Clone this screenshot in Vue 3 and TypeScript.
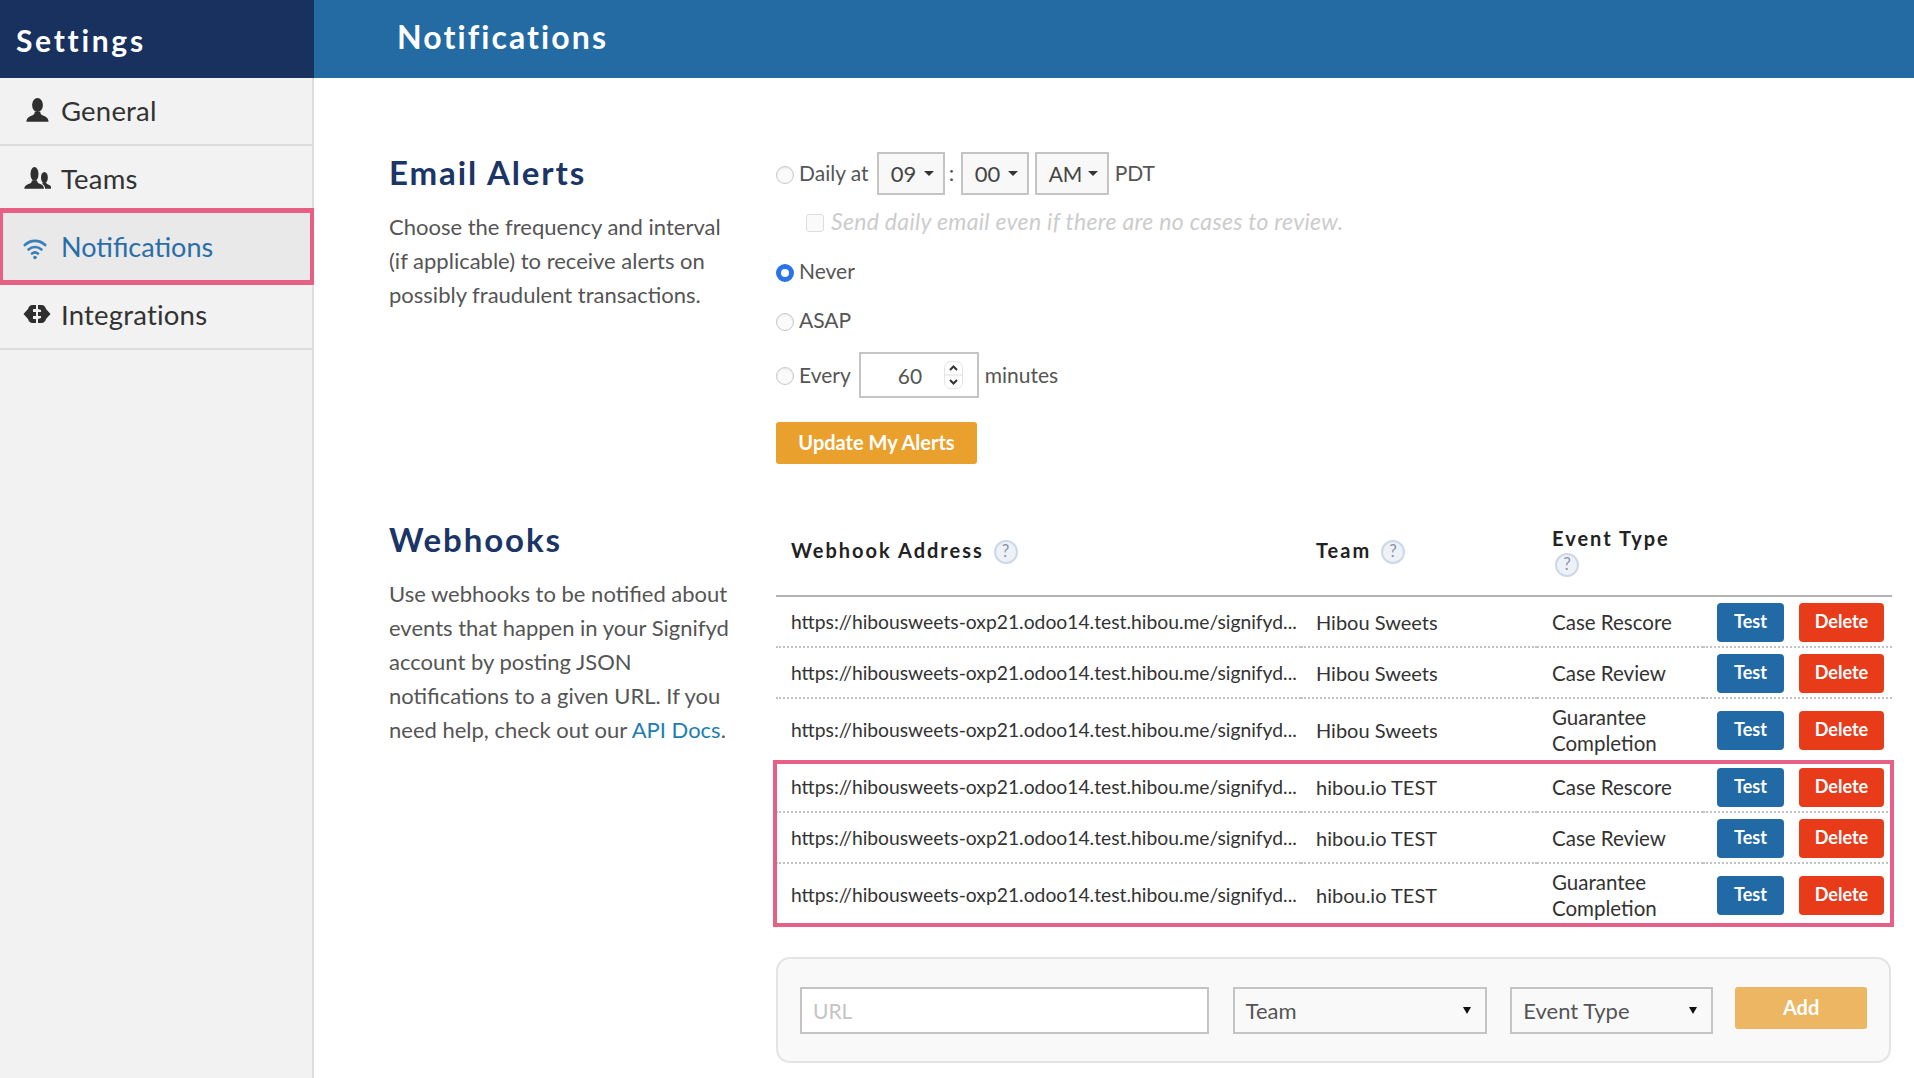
<template>
  <div class="page">
    <aside class="sidebar">
      <div class="side-title">Settings</div>
      <nav class="side-nav">
        <a class="side-item">
          <svg class="side-icon" viewBox="0 0 28 28" width="28" height="28" fill="#2f2f2f">
            <ellipse cx="14.500" cy="9" rx="5.400" ry="7" />
            <path d="M3.500 25.800c0-4 3-5.500 6-6.500 1.500-.5 2.200-1.500 2.200-3.500h5.600c0 2 .7 3 2.200 3.500 3 1 6 2.500 6 6.500z" />
          </svg>
          <span>General</span>
        </a>
        <a class="side-item">
          <svg class="side-icon" viewBox="0 0 28 28" width="28" height="28" fill="#2f2f2f">
            <ellipse cx="11.500" cy="10" rx="4" ry="7" />
            <ellipse cx="21.400" cy="13.500" rx="3.400" ry="5.500" />
            <path d="M1.300 24.800c0-3 2.500-4.300 5-5.100 1.800-.6 2.500-1.400 2.500-3.200h5.400c0 1.800.7 2.600 2.500 3.200 2.500.8 4.300 2.100 4.300 5.100z" />
            <path d="M19.500 18.500h3.800c0 1 .6 1.500 1.800 2 2 .7 3.600 1.800 3.600 4.300h-6.500c-.2-2.300-1-3.500-2.700-4.800z" />
          </svg>
          <span>Teams</span>
        </a>
        <a class="side-item active">
          <svg class="side-icon" viewBox="0 0 28 28" width="28" height="28" fill="none" stroke="#3a7fb8" stroke-width="2.600" stroke-linecap="round">
            <path d="M1.800 12c6-5.500 14.400-5.500 20.400 0" />
            <path d="M5.500 16.500c3.800-3.400 9.200-3.400 13 0" />
            <path d="M9 20.500c1.900-1.500 4.100-1.500 6 0" />
            <circle cx="12" cy="24.500" r="1.800" fill="#3a7fb8" stroke="none" />
          </svg>
          <span>Notifications</span>
        </a>
        <a class="side-item">
          <svg class="side-icon" viewBox="0 0 28 28" width="28" height="28" fill="#2f2f2f">
            <path d="M13 5H9.500C7 5 5.500 6.800 5 9L.5 14 5 19c.5 2.200 2 4 4.500 4H13v-4h-3v-3h3v-4h-3V9h3z" />
            <path d="M15 5h3.500c2.500 0 4 1.800 4.500 4l4.500 5-4.500 5c-.5 2.200-2 4-4.500 4H15v-4l3-1v-2h-3v-4h3v-2l-3-1z" />
          </svg>
          <span>Integrations</span>
        </a>
      </nav>
    </aside>

    <div class="main">
      <header class="topbar">Notifications</header>
      <div class="content">
        <section class="section email">
          <div class="intro">
            <h2>Email Alerts</h2>
            <p>Choose the frequency and interval (if applicable) to receive alerts on possibly fraudulent transactions.</p>
          </div>
          <div class="alerts">
            <div class="alert-row daily">
              <input class="radio" type="radio" name="freq" />
              <span>Daily at</span>
              <div class="mini-select" v-for="opt in timeSelects" :key="opt.label" :class="opt.cls">
                <span>{{ opt.label }}</span><i class="caret"></i>
              </div>
              <span class="zone">PDT</span>
            </div>
            <div class="alert-row checkrow">
              <span class="check"></span>
              <em>Send daily email even if there are no cases to review.</em>
            </div>
            <div class="alert-row never">
              <input class="radio" type="radio" name="freq" checked />
              <span>Never</span>
            </div>
            <div class="alert-row asap">
              <input class="radio" type="radio" name="freq" />
              <span>ASAP</span>
            </div>
            <div class="alert-row every">
              <input class="radio" type="radio" name="freq" />
              <span>Every</span>
              <div class="number-box">
                <b>60</b>
                <div class="spinner">
                  <svg viewBox="0 0 19 28" width="19" height="28" fill="none" stroke="#333" stroke-width="2">
                    <rect x=".5" y=".5" width="18" height="27" rx="6" fill="#fff" stroke="#e4e4e4" stroke-width="1" />
                    <path d="M1 14h17" stroke="#ddd" stroke-width="1" />
                    <path d="M6 9l3.500-3.500L13 9" />
                    <path d="M6 19l3.500 3.500L13 19" />
                  </svg>
                </div>
              </div>
              <span class="unit">minutes</span>
            </div>
            <button class="btn-update" type="button">Update My Alerts</button>
          </div>
        </section>

        <section class="section hooks">
          <div class="intro">
            <h2>Webhooks</h2>
            <p>Use webhooks to be notified about events that happen in your Signifyd account by posting JSON notifications to a given URL. If you need help, check out our <a class="link">API Docs</a>.</p>
          </div>
          <div class="hooks-body">
            <div class="table-wrap">
              <table class="hook-table">
                <colgroup>
                  <col class="col-url" />
                  <col class="col-team" />
                  <col class="col-event" />
                  <col />
                </colgroup>
                <thead>
                  <tr>
                    <th>Webhook Address <span class="help">?</span></th>
                    <th>Team <span class="help">?</span></th>
                    <th>Event Type <span class="help stacked">?</span></th>
                    <th></th>
                  </tr>
                </thead>
                <tbody>
                  <tr v-for="(row, i) in rows" :key="i">
                    <td class="url">{{ hookUrl }}</td>
                    <td class="team">{{ row.team }}</td>
                    <td class="event">{{ row.event }}</td>
                    <td class="actions">
                      <button class="btn-test" type="button">Test</button>
                      <button class="btn-delete" type="button">Delete</button>
                    </td>
                  </tr>
                </tbody>
              </table>
              <div class="highlight"></div>
            </div>

            <div class="add-box">
              <div class="field url-field">URL</div>
              <div class="field select-field team-field"><span>Team</span><i class="caret dark"></i></div>
              <div class="field select-field event-field"><span>Event Type</span><i class="caret dark"></i></div>
              <button class="btn-add" type="button">Add</button>
            </div>
          </div>
        </section>
      </div>
    </div>
  </div>
</template>

<script setup lang="ts">
interface HookRow {
  team: string
  event: string
}

const hookUrl = 'https://hibousweets-oxp21.odoo14.test.hibou.me/signifyd...'

const timeSelects = [
  { label: '09', cls: 'hour' },
  { label: '00', cls: 'minute' },
  { label: 'AM', cls: 'ampm' },
]

const rows: HookRow[] = [
  { team: 'Hibou Sweets', event: 'Case Rescore' },
  { team: 'Hibou Sweets', event: 'Case Review' },
  { team: 'Hibou Sweets', event: 'Guarantee Completion' },
  { team: 'hibou.io TEST', event: 'Case Rescore' },
  { team: 'hibou.io TEST', event: 'Case Review' },
  { team: 'hibou.io TEST', event: 'Guarantee Completion' },
]
</script>

<style>
html,
body {
  margin: 0;
  height: 100%;
  overflow: hidden;
  background: #fff;
}
</style>

<style scoped>
.page {
  display: flex;
  height: 1078px;
  font-family: Lato, "Open Sans", sans-serif;
  color: #333;
}

.sidebar {
  width: 314px;
  flex: none;
  display: flex;
  flex-direction: column;
}
.side-title {
  height: 78px;
  flex: none;
  box-sizing: border-box;
  padding: 0 0 0 16px;
  background: #18315f;
  color: #fff;
  font-size: 30px;
  font-weight: 700;
  letter-spacing: 2.7px;
  line-height: 80px;
}
.side-nav {
  flex: 1;
  background: #f2f2f2;
  border-right: 2px solid #dedede;
}
.side-item {
  display: flex;
  align-items: center;
  gap: 10px;
  box-sizing: border-box;
  height: 68px;
  padding: 0 0 2px 23px;
  font-size: 27.5px;
  letter-spacing: 0.2px;
  color: #333;
  border-bottom: 2px solid #dcdcdc;
  margin-right: -2px;
}
.side-icon {
  flex: none;
}
.side-item:nth-child(2) {
  height: 62px;
  padding-top: 4px;
  border-bottom: none;
}
.side-item.active {
  height: 77px;
  padding: 0 0 0 20px;
  color: #2a6ea8;
  background: #e9e9e9;
  border: 3px solid #e85f85;
  border-width: 5px 4px 5px 3px;
  font-size: 27px;
  letter-spacing: 0;
}
.side-item:nth-child(4) {
  height: 65px;
  padding-bottom: 5px;
}

.main {
  flex: 1;
  min-width: 0;
}
.topbar {
  height: 78px;
  box-sizing: border-box;
  padding-left: 83px;
  background: #256ba3;
  color: #fff;
  font-size: 32px;
  font-weight: 700;
  letter-spacing: 2.1px;
  line-height: 74px;
}
.content {
  padding: 74px 22px 0 75px;
}

.section {
  display: grid;
  grid-template-columns: 387px 1fr;
}
.hooks {
  margin-top: 55px;
}
.intro h2 {
  margin: -1px 0 17px;
  font-size: 33px;
  line-height: 42px;
  font-weight: 700;
  letter-spacing: 1.9px;
  color: #1a3566;
}
.intro p {
  margin: 0;
  width: 350px;
  font-size: 22px;
  line-height: 34px;
  color: #555;
}
.link {
  color: #1c7eb0;
}

.alerts {
  display: flex;
  flex-direction: column;
  align-items: flex-start;
  font-size: 21px;
  color: #555;
}
.alert-row {
  display: flex;
  align-items: center;
}
.alert-row > span,
.alert-row > em {
  margin-bottom: 2px;
}
.radio {
  appearance: none;
  box-sizing: border-box;
  width: 18px;
  height: 18px;
  margin: 2px 5px 0 0;
  border-radius: 50%;
  border: 1px solid #c8c8c8;
  background: #fafafa;
  box-shadow: inset 0 1px 2px rgba(0, 0, 0, 0.08);
}
.radio:checked {
  border: 5px solid #2a73e8;
  background: #fff;
  box-shadow: none;
}
.daily {
  height: 43px;
}
.mini-select {
  box-sizing: border-box;
  height: 43px;
  margin-left: 7px;
  display: flex;
  align-items: center;
  justify-content: space-between;
  padding: 0 9px 0 12px;
  background: #f8f8f8;
  border: 2px solid #c4c4c4;
  font-size: 22px;
  color: #444;
}
.hour {
  width: 68px;
  margin-left: 8px;
}
.minute {
  width: 68px;
  margin-left: 16px;
  position: relative;
}
.minute::before {
  content: ":";
  position: absolute;
  left: -14px;
  top: 5px;
  color: #555;
}
.ampm {
  width: 74px;
  margin-left: 6px;
  font-size: 21px;
}
.zone {
  margin-left: 6px;
}
.caret {
  display: inline-block;
  width: 0;
  height: 0;
  border-left: 5px solid transparent;
  border-right: 5px solid transparent;
  border-top: 5px solid #333;
}
.caret.dark {
  border-left-width: 4px;
  border-right-width: 4px;
  border-top: 7px solid #111;
}
.checkrow {
  height: 54px;
  padding-left: 30px;
  color: #ccc;
}
.checkrow em {
  font-size: 23px;
  letter-spacing: 0.3px;
  margin-left: 7px;
}
.check {
  box-sizing: border-box;
  width: 18px;
  height: 18px;
  margin: 3px 0 0;
  border: 1px solid #ddd;
  border-radius: 3px;
  background: #fafafa;
}
.never {
  height: 45px;
}
.asap {
  height: 53px;
}
.every {
  height: 46px;
  margin-top: 5px;
}
.number-box {
  box-sizing: border-box;
  width: 120px;
  height: 46px;
  margin-left: 8px;
  padding: 0 14px 0 37px;
  display: flex;
  align-items: center;
  justify-content: space-between;
  border: 2px solid #c4c4c4;
  font-size: 21px;
  color: #555;
}
.number-box b {
  font-weight: 400;
}
.spinner {
  display: flex;
}
.unit {
  margin-left: 6px;
}
.btn-update {
  margin-top: 24px;
  width: 201px;
  height: 42px;
  padding: 0 0 2px;
  border: none;
  border-radius: 3px;
  background: #e9a02c;
  color: #fff;
  font-family: inherit;
  font-size: 20px;
  font-weight: 700;
}

.table-wrap {
  position: relative;
}
.hook-table {
  width: 1116px;
  table-layout: fixed;
  border-collapse: collapse;
  font-size: 20px;
  color: #333;
}
.col-url {
  width: 525px;
}
.col-team {
  width: 236px;
}
.col-event {
  width: 166px;
}
.hook-table th {
  height: 77px;
  box-sizing: border-box;
  padding: 0 0 13px 15px;
  border-bottom: 2px solid #b3b3b3;
  text-align: left;
  font-size: 20px;
  font-weight: 700;
  line-height: 26px;
  letter-spacing: 2px;
  color: #222;
  vertical-align: middle;
}
.help {
  display: inline-block;
  box-sizing: border-box;
  width: 24px;
  height: 24px;
  margin-left: 3px;
  border: 2px solid #cdd8e6;
  border-radius: 50%;
  background: #eef2f8;
  color: #8a94a6;
  font-size: 17px;
  font-weight: 400;
  letter-spacing: 0;
  line-height: 18px;
  text-align: center;
  vertical-align: middle;
}
.help.stacked {
  display: block;
  margin: 2px 0 0 3px;
}
.hook-table td {
  height: 47px;
  padding: 0 0 0 15px;
  border-bottom: 2px dotted #c2c2c2;
  line-height: 26px;
}
.hook-table tbody tr:nth-child(3n) td {
  height: 59px;
}
.hook-table tbody tr:last-child td {
  border-bottom: none;
}
.hook-table td.url {
  font-size: 19.3px;
  white-space: nowrap;
  overflow: hidden;
}
.hook-table td.team {
  padding-top: 1px;
}
.hook-table td.event {
  font-size: 20.5px;
}
.hook-table td.actions {
  padding: 2px 0 0 14px;
  white-space: nowrap;
}
.btn-test,
.btn-delete {
  height: 39px;
  border: none;
  border-radius: 4px;
  color: #fff;
  font-family: inherit;
  font-size: 18px;
  font-weight: 700;
  padding: 0 0 4px;
}
.btn-test {
  width: 67px;
  background: #226aa5;
}
.btn-delete {
  width: 85px;
  margin-left: 15px;
  background: #e83b1a;
}
.highlight {
  position: absolute;
  left: -3px;
  top: 241px;
  width: 1121px;
  height: 167px;
  box-sizing: border-box;
  border: 4px solid #e85f85;
  pointer-events: none;
}

.add-box {
  box-sizing: border-box;
  width: 1115px;
  height: 106px;
  margin-top: 32px;
  padding: 28px 22px 0 22px;
  display: flex;
  align-items: flex-start;
  background: #f9f9f9;
  border: 2px solid #e4e4e4;
  border-radius: 14px;
}
.field {
  box-sizing: border-box;
  height: 47px;
  padding-left: 11px;
  display: flex;
  align-items: center;
  background: #fff;
  border: 2px solid #c4c4c4;
  font-size: 22px;
  color: #555;
}
.url-field {
  width: 409px;
  color: #c4c4c4;
  font-size: 21px;
}
.select-field {
  background: #f9f9f9;
  justify-content: space-between;
  padding-right: 14px;
}
.team-field {
  width: 255px;
  margin-left: 24px;
}
.event-field {
  width: 203px;
  margin-left: 23px;
}
.btn-add {
  width: 132px;
  height: 42px;
  margin-left: 22px;
  padding: 0 0 2px;
  border: none;
  border-radius: 3px;
  background: #ecb662;
  color: #fff;
  font-family: inherit;
  font-size: 20px;
  font-weight: 700;
}
</style>
